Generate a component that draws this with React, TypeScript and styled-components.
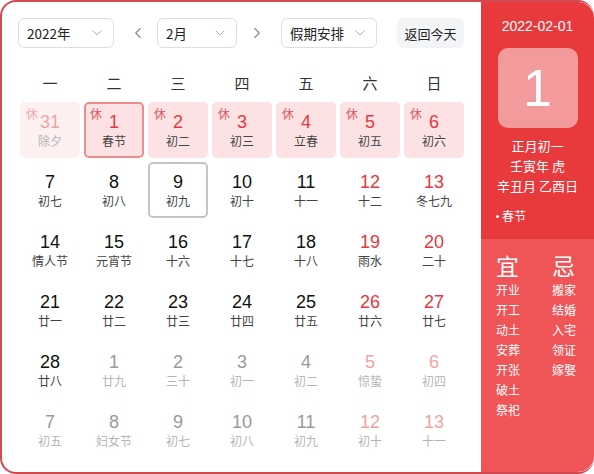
import * as React from 'react';
import styled, { createGlobalStyle } from 'styled-components';
import { ChevronDown, ChevronLeft, ChevronRight } from 'lucide-react';

const GlobalStyle = createGlobalStyle`
  html, body {
    margin: 0;
    padding: 0;
    background: #fff;
  }
  body {
    font-family: "Noto Sans CJK SC", "Liberation Sans", sans-serif;
  }
`;

const Frame = styled.div`
  width: 594px;
  height: 474px;
  box-sizing: border-box;
  display: flex;
  border: 2px solid #d04a4f;
  border-right: none;
  border-radius: 16px;
  overflow: hidden;
`;

const Main = styled.div`
  flex: 1;
  padding: 16px 0 0 16px;
`;

const Toolbar = styled.div`
  display: flex;
  align-items: center;
  height: 30px;
`;

const Select = styled.div<{ $w: number; $ml?: number }>`
  width: ${p => p.$w}px;
  height: 30px;
  margin-left: ${p => p.$ml || 0}px;
  box-sizing: border-box;
  border: 1px solid #dcdfe6;
  border-radius: 6px;
  display: flex;
  align-items: center;
  justify-content: space-between;
  padding: 0 8px 0 8px;
  font-size: 13.5px;
  color: #222;
  svg {
    color: #a8abb2;
  }
`;

const ArrowBtn = styled.div<{ $ml: number }>`
  width: 24px;
  height: 30px;
  margin-left: ${p => p.$ml}px;
  display: flex;
  align-items: center;
  justify-content: center;
  color: #888;
`;

const TodayBtn = styled.div`
  width: 67px;
  height: 30px;
  margin-left: 20px;
  border-radius: 6px;
  background: #f3f4f6;
  display: flex;
  align-items: center;
  justify-content: center;
  font-size: 13px;
  color: #222;
`;

const WeekHeader = styled.div`
  display: grid;
  grid-template-columns: repeat(7, 60px);
  column-gap: 4px;
  margin: 20px 0 0 2px;
  height: 28px;
  align-items: center;
`;

const WeekDay = styled.div`
  text-align: center;
  font-size: 15px;
  color: #333;
`;

const Grid = styled.div`
  display: grid;
  grid-template-columns: repeat(7, 60px);
  grid-auto-rows: 56px;
  gap: 4px;
  margin: 6px 0 0 2px;
`;

type Tone = 'normal' | 'weekend' | 'dim' | 'dimWeekend';

const numberColors: Record<Tone, string> = {
  normal: '#111',
  weekend: '#e5383d',
  dim: '#9a9a9a',
  dimWeekend: '#f0a3a6',
};

const Cell = styled.div<{ $bg: string; $border: string }>`
  position: relative;
  box-sizing: border-box;
  border-radius: 5px;
  background: ${p => p.$bg};
  border: 2px solid ${p => p.$border};
  display: flex;
  flex-direction: column;
  align-items: center;
  padding-top: 7px;
`;

const DayNum = styled.div<{ $tone: Tone }>`
  font-family: "Liberation Sans", Arial, sans-serif;
  font-size: 18px;
  line-height: 22px;
  color: ${p => numberColors[p.$tone]};
`;

const Lunar = styled.div<{ $dim: boolean }>`
  font-size: 12px;
  line-height: 16px;
  color: ${p => (p.$dim ? '#b5b5b5' : '#444')};
`;

const Rest = styled.span<{ $dim: boolean }>`
  position: absolute;
  left: 4px;
  top: 3px;
  font-size: 12px;
  line-height: 14px;
  color: ${p => (p.$dim ? '#f0a8ab' : '#e0555a')};
`;

const Side = styled.div`
  width: 113px;
  display: flex;
  flex-direction: column;
  border-radius: 0 16px 16px 0;
  overflow: hidden;
  color: #fff;
`;

const SideTop = styled.div`
  height: 237px;
  background: #e8393d;
  display: flex;
  flex-direction: column;
  align-items: center;
  padding-top: 14px;
  box-sizing: border-box;
`;

const SideDate = styled.div`
  font-family: "Liberation Sans", Arial, sans-serif;
  font-size: 14px;
  line-height: 20px;
`;

const BigDay = styled.div`
  width: 80px;
  height: 80px;
  margin-top: 12px;
  border-radius: 10px;
  background: #f39a9c;
  display: flex;
  align-items: center;
  justify-content: center;
  font-family: "Liberation Sans", Arial, sans-serif;
  font-size: 52px;
`;

const LunarInfo = styled.div`
  margin-top: 8px;
  font-size: 13px;
  line-height: 20px;
  text-align: center;
`;

const Festival = styled.div`
  align-self: flex-start;
  margin: 12px 0 0 15px;
  font-size: 12px;
  line-height: 16px;
  display: flex;
  align-items: center;
  gap: 3px;
`;

const Dot = styled.span`
  width: 3px;
  height: 3px;
  border-radius: 50%;
  background: #fff;
`;

const SideBottom = styled.div`
  flex: 1;
  background: #ef5457;
  display: flex;
  padding: 12px 0 0 15px;
  gap: 32px;
`;

const AdviceCol = styled.div`
  display: flex;
  flex-direction: column;
`;

const AdviceTitle = styled.div`
  font-size: 23px;
  line-height: 28px;
  margin-bottom: 1px;
`;

const AdviceItem = styled.div`
  font-size: 12px;
  line-height: 20px;
`;

type Day = {
  n: number;
  lunar: string;
  dim?: boolean;
  rest?: boolean;
  selected?: boolean;
  today?: boolean;
};

const days: Day[] = [
  { n: 31, lunar: '除夕', dim: true, rest: true },
  { n: 1, lunar: '春节', rest: true, selected: true },
  { n: 2, lunar: '初二', rest: true },
  { n: 3, lunar: '初三', rest: true },
  { n: 4, lunar: '立春', rest: true },
  { n: 5, lunar: '初五', rest: true },
  { n: 6, lunar: '初六', rest: true },
  { n: 7, lunar: '初七' },
  { n: 8, lunar: '初八' },
  { n: 9, lunar: '初九', today: true },
  { n: 10, lunar: '初十' },
  { n: 11, lunar: '十一' },
  { n: 12, lunar: '十二' },
  { n: 13, lunar: '冬七九' },
  { n: 14, lunar: '情人节' },
  { n: 15, lunar: '元宵节' },
  { n: 16, lunar: '十六' },
  { n: 17, lunar: '十七' },
  { n: 18, lunar: '十八' },
  { n: 19, lunar: '雨水' },
  { n: 20, lunar: '二十' },
  { n: 21, lunar: '廿一' },
  { n: 22, lunar: '廿二' },
  { n: 23, lunar: '廿三' },
  { n: 24, lunar: '廿四' },
  { n: 25, lunar: '廿五' },
  { n: 26, lunar: '廿六' },
  { n: 27, lunar: '廿七' },
  { n: 28, lunar: '廿八' },
  { n: 1, lunar: '廿九', dim: true },
  { n: 2, lunar: '三十', dim: true },
  { n: 3, lunar: '初一', dim: true },
  { n: 4, lunar: '初二', dim: true },
  { n: 5, lunar: '惊蛰', dim: true },
  { n: 6, lunar: '初四', dim: true },
  { n: 7, lunar: '初五', dim: true },
  { n: 8, lunar: '妇女节', dim: true },
  { n: 9, lunar: '初七', dim: true },
  { n: 10, lunar: '初八', dim: true },
  { n: 11, lunar: '初九', dim: true },
  { n: 12, lunar: '初十', dim: true },
  { n: 13, lunar: '十一', dim: true },
];

const weekDays = ['一', '二', '三', '四', '五', '六', '日'];
const good = ['开业', '开工', '动土', '安葬', '开张', '破土', '祭祀'];
const bad = ['搬家', '结婚', '入宅', '领证', '嫁娶'];

function toneOf(d: Day, col: number): Tone {
  const red = col >= 5 || (d.rest && !d.dim);
  if (d.dim) return red || d.rest ? 'dimWeekend' : 'dim';
  return red ? 'weekend' : 'normal';
}

function DayCell({ d, col }: { d: Day; col: number }) {
  let bg = 'transparent';
  if (d.rest) bg = d.dim ? '#fdf0f1' : '#fde2e4';
  let border = 'transparent';
  if (d.selected) border = '#ee8b8d';
  if (d.today) border = '#c3c5cb';
  return (
    <Cell $bg={bg} $border={border}>
      {d.rest && <Rest $dim={!!d.dim}>休</Rest>}
      <DayNum $tone={toneOf(d, col)}>{d.n}</DayNum>
      <Lunar $dim={!!d.dim}>{d.lunar}</Lunar>
    </Cell>
  );
}

export default function App() {
  return (
    <>
      <GlobalStyle />
      <Frame>
        <Main>
          <Toolbar>
            <Select $w={96}>
              2022年
              <ChevronDown size={16} strokeWidth={1.5} />
            </Select>
            <ArrowBtn $ml={12}>
              <ChevronLeft size={18} strokeWidth={1.5} />
            </ArrowBtn>
            <Select $w={80} $ml={7}>
              2月
              <ChevronDown size={16} strokeWidth={1.5} />
            </Select>
            <ArrowBtn $ml={8}>
              <ChevronRight size={18} strokeWidth={1.5} />
            </ArrowBtn>
            <Select $w={96} $ml={12}>
              假期安排
              <ChevronDown size={16} strokeWidth={1.5} />
            </Select>
            <TodayBtn>返回今天</TodayBtn>
          </Toolbar>

          <WeekHeader>
            {weekDays.map(w => (
              <WeekDay key={w}>{w}</WeekDay>
            ))}
          </WeekHeader>

          <Grid>
            {days.map((d, i) => (
              <DayCell key={i} d={d} col={i % 7} />
            ))}
          </Grid>
        </Main>

        <Side>
          <SideTop>
            <SideDate>2022-02-01</SideDate>
            <BigDay>1</BigDay>
            <LunarInfo>
              <div>正月初一</div>
              <div>壬寅年 虎</div>
              <div>辛丑月 乙酉日</div>
            </LunarInfo>
            <Festival>
              <Dot />
              春节
            </Festival>
          </SideTop>
          <SideBottom>
            <AdviceCol>
              <AdviceTitle>宜</AdviceTitle>
              {good.map(g => (
                <AdviceItem key={g}>{g}</AdviceItem>
              ))}
            </AdviceCol>
            <AdviceCol>
              <AdviceTitle>忌</AdviceTitle>
              {bad.map(b => (
                <AdviceItem key={b}>{b}</AdviceItem>
              ))}
            </AdviceCol>
          </SideBottom>
        </Side>
      </Frame>
    </>
  );
}
